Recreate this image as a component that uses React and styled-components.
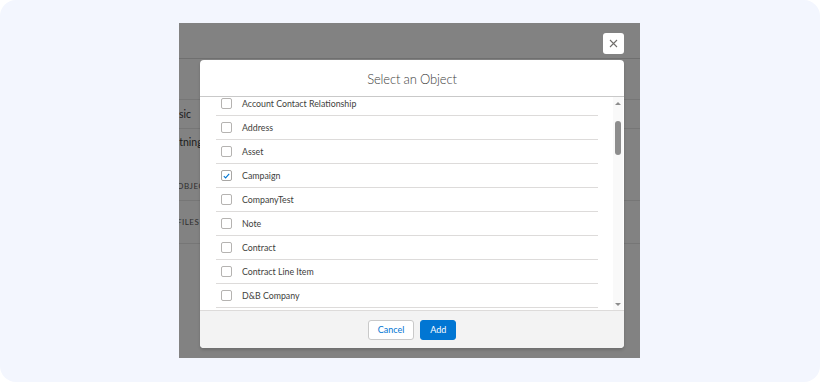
import React, { useLayoutEffect, useRef, useState } from 'react';
import styled, { createGlobalStyle } from 'styled-components';

const GlobalStyle = createGlobalStyle`
  html, body { margin: 0; padding: 0; background: #ffffff; }
  body { font-family: Lato, "Open Sans", "Liberation Sans", sans-serif; }
  * { box-sizing: border-box; }
`;

const Page = styled.div`
  width: 820px;
  height: 382px;
  border-radius: 16px;
  background: #f3f6fe;
  padding: 23px 0 0 179px;
`;

const Frame = styled.div`
  position: relative;
  width: 461px;
  height: 335px;
  background: #828282;
  overflow: hidden;
`;

const Backdrop = styled.div`
  display: flex;
  flex-direction: column;
`;

const BackBar = styled.div`
  height: ${p => p.$h}px;
  border-bottom: 1px solid ${p => (p.$dark ? '#6f6f6f' : '#767676')};
  display: flex;
  flex-direction: column;
  justify-content: ${p => (p.$split ? 'space-between' : 'center')};
  padding: ${p => (p.$split ? '7px 0 9px' : '0')};
`;

const BackLabel = styled.span`
  display: block;
  margin-left: ${p => -p.$cut}px;
  font-size: ${p => (p.$caps ? '8px' : '10.5px')};
  letter-spacing: ${p => (p.$caps ? '0.5px' : '0')};
  text-transform: ${p => (p.$caps ? 'uppercase' : 'none')};
  color: ${p => (p.$caps ? '#2e2e2e' : '#1c1c1c')};
  white-space: nowrap;
`;

const CloseButton = styled.button`
  position: absolute;
  top: 10px;
  left: 424px;
  width: 21px;
  height: 21px;
  padding: 0;
  border: none;
  border-radius: 3px;
  background: #ffffff;
  display: flex;
  align-items: center;
  justify-content: center;
  cursor: pointer;
`;

const Modal = styled.div`
  position: absolute;
  top: 37px;
  left: 21px;
  width: 424px;
  height: 288px;
  background: #ffffff;
  border-radius: 4px;
  box-shadow: 0 2px 3px rgba(0, 0, 0, 0.16);
  display: flex;
  flex-direction: column;
  overflow: hidden;
`;

const Header = styled.div`
  height: 37px;
  flex: none;
  border-bottom: 1px solid #c9c9c9;
  display: flex;
  align-items: center;
  justify-content: center;
  padding-top: 1px;

  h2 {
    margin: 0;
    font-size: 13px;
    font-weight: 300;
    letter-spacing: -0.15px;
    color: #3e3e3c;
  }
`;

const Body = styled.div`
  flex: 1;
  min-height: 0;
  display: flex;
  padding-right: 1px;
`;

const ListClip = styled.div`
  flex: 1;
  overflow: hidden;
  padding: 0 15px 0 16px;
`;

const Rail = styled.div`
  width: 10px;
  flex: none;
  background: #f9f9f9;
  display: flex;
  flex-direction: column;
  align-items: center;
`;

const Arrow = styled.span`
  height: 12px;
  flex: none;
  display: flex;
  align-items: center;
  justify-content: center;

  &::before {
    content: '';
    width: 0;
    height: 0;
    border-left: 3px solid transparent;
    border-right: 3px solid transparent;
    ${p => (p.$down ? 'border-top' : 'border-bottom')}: 3px solid #8d8d8d;
  }
`;

const Track = styled.div`
  flex: 1;
  width: 100%;
  display: flex;
  justify-content: center;
`;

const Thumb = styled.div`
  margin-top: 12px;
  width: 6px;
  height: 34px;
  border-radius: 3px;
  background: #8d8d8d;
`;

const Row = styled.label`
  height: 24px;
  display: flex;
  align-items: center;
  gap: 10px;
  padding-left: 5px;
  border-bottom: 1px solid #dddbda;
  font-size: 8.8px;
  color: #3e3e3c;
  cursor: pointer;
  white-space: nowrap;
`;

const Box = styled.span`
  width: 11px;
  height: 11px;
  flex: none;
  border: 1px solid ${p => (p.$checked ? '#a8a6a4' : '#b5b3b1')};
  border-radius: 2px;
  background: #ffffff;
  display: flex;
  align-items: center;
  justify-content: center;
`;

const Footer = styled.div`
  height: 38px;
  flex: none;
  background: #f3f3f3;
  border-top: 1px solid #dddbda;
  display: flex;
  align-items: center;
  justify-content: center;
  gap: 6px;
`;

const Button = styled.button`
  height: 20px;
  padding: 0 ${p => (p.$brand ? '9px' : '9px')};
  border-radius: 3px;
  border: 1px solid ${p => (p.$brand ? '#0176d3' : '#c9c9c9')};
  background: ${p => (p.$brand ? '#0176d3' : '#ffffff')};
  color: ${p => (p.$brand ? '#ffffff' : '#0176d3')};
  font-family: Lato, "Open Sans", "Liberation Sans", sans-serif;
  font-size: 9px;
  cursor: pointer;
`;

const objects = [
  'Accepted Event Relation', 'Account', 'Account Brand',
  'Account Contact Relationship', 'Address', 'Asset', 'Campaign', 'CompanyTest',
  'Note', 'Contract', 'Contract Line Item', 'D&B Company',
  'Document', 'Duplicate Record Item', 'Duplicate Record Set', 'Email Message',
  'Entitlement', 'Event', 'Individual', 'Lead', 'Location', 'Macro',
  'Opportunity', 'Opportunity Product', 'Order', 'Order Product', 'Price Book',
  'Price Book Entry', 'Product', 'Product Consumed', 'Product Item',
  'Product Request', 'Product Transfer', 'Quick Text', 'Recommendation',
  'Return Order', 'Scorecard', 'Service Appointment', 'Service Contract',
  'Service Resource', 'Service Territory', 'Shipment', 'Social Post',
  'Solution', 'Task', 'Time Sheet', 'Work Order', 'Work Type',
];

const Check = () => (
  <svg width="7" height="6" viewBox="0 0 7 6">
    <path d="M0.8 3.2 L2.6 4.9 L6.2 0.9" fill="none" stroke="#0176d3" strokeWidth="1.1" />
  </svg>
);

const App = () => {
  const [picked, setPicked] = useState(['Campaign']);
  const listRef = useRef(null);

  useLayoutEffect(() => {
    if (listRef.current) listRef.current.scrollTop = 77;
  }, []);

  const toggle = name => {
    setPicked(picked.includes(name) ? picked.filter(n => n !== name) : [...picked, name]);
  };

  return (
    <>
      <GlobalStyle />
      <Page>
        <Frame>
          <Backdrop>
            <BackBar $h={36} $dark />
            <BackBar $h={41} />
            <BackBar $h={29}>
              <BackLabel $cut={12}>Basic</BackLabel>
            </BackBar>
            <BackBar $h={72} $split>
              <BackLabel $cut={19}>Lightning</BackLabel>
              <BackLabel $cut={2} $caps>Objects</BackLabel>
            </BackBar>
            <BackBar $h={43}>
              <BackLabel $cut={2} $caps>Files</BackLabel>
            </BackBar>
          </Backdrop>

          <CloseButton aria-label="Close">
            <svg width="9" height="9" viewBox="0 0 9 9">
              <path d="M1 1 L8 8 M8 1 L1 8" stroke="#706e6b" strokeWidth="1.1" />
            </svg>
          </CloseButton>

          <Modal>
            <Header>
              <h2>Select an Object</h2>
            </Header>
            <Body>
              <ListClip ref={listRef}>
                {objects.map(name => (
                  <Row key={name} onClick={() => toggle(name)}>
                    <Box $checked={picked.includes(name)}>
                      {picked.includes(name) && <Check />}
                    </Box>
                    {name}
                  </Row>
                ))}
              </ListClip>
              <Rail>
                <Arrow />
                <Track>
                  <Thumb />
                </Track>
                <Arrow $down />
              </Rail>
            </Body>
            <Footer>
              <Button>Cancel</Button>
              <Button $brand>Add</Button>
            </Footer>
          </Modal>
        </Frame>
      </Page>
    </>
  );
};

export default App;
